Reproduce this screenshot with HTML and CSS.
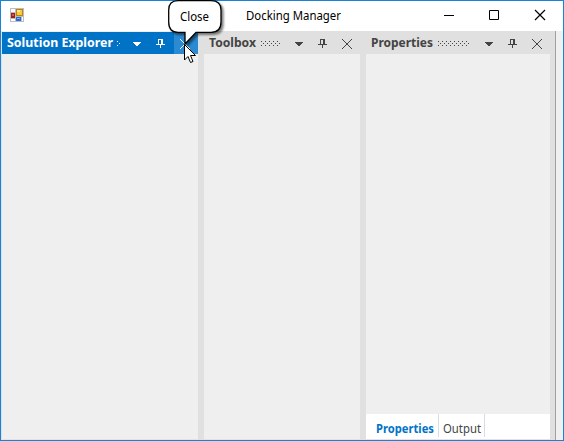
FILE: index.html
```html
<!DOCTYPE html>
<html lang="en">
<head>
<meta charset="utf-8">
<title>Docking Manager</title>
<link rel="stylesheet" href="styles.css">
</head>
<body>
<svg class="defs" width="0" height="0">
  <defs>
    <symbol id="arrow" viewBox="0 0 8 4"><path d="M0 0h8v1H0zM1 1h6v1H1zM2 2h4v1H2zM3 3h2v1H3z" fill="currentColor"/></symbol>
    <symbol id="pin" viewBox="0 0 9 9"><path d="M2 0h5v5H2zM3 1v4h2V1zM0 5h9v1H0zM4 6h1v3H4z" fill="currentColor" fill-rule="evenodd"/></symbol>
    <symbol id="cross" viewBox="0 0 10 10"><path d="M0 0L10 10M10 0L0 10" stroke="currentColor"/></symbol>
  </defs>
</svg>
<div class="window">
  <header class="titlebar">
    <svg class="app-icon" width="14" height="14" shape-rendering="crispEdges">
      <path d="M0 0h14v14H0z" fill="#bdbdbd"/><path d="M1 1h4v3H1zM1 11h4v2H1zM12 9h1v4h-1z" fill="#fff"/>
      <path d="M1 5h4v5H1z" fill="#a51c13"/><path d="M2 6h2v2H2z" fill="#d9534a"/>
      <path d="M6 1h7v7H6z" fill="#b8860b"/><path d="M7 2h5v5H7z" fill="#ffc83c"/><path d="M7 2h3v2H7z" fill="#ffe699"/>
      <path d="M6 9h5v4H6z" fill="#2f6bd0"/><path d="M7 10h3v1H7z" fill="#7da9f5"/>
    </svg>
    <h1><svg width="96" height="18"><text x="0" y="13" textLength="95" lengthAdjust="spacingAndGlyphs">Docking Manager</text></svg></h1>
    <svg class="min" width="10" height="10"><path d="M0 5h10v1H0z"/></svg>
    <svg class="max" width="10" height="10"><path d="M.5 .5h9v9h-9z" fill="none" stroke="#000"/></svg>
    <svg class="exit" width="10" height="10"><path d="M0 0L10 10M10 0L0 10" stroke="#000" stroke-width="1.2"/></svg>
  </header>
  <main class="dock">
    <section class="panel solution active">
      <div class="caption"><svg class="name" width="106" height="18"><text x="0" y="13" textLength="106" lengthAdjust="spacingAndGlyphs">Solution Explorer</text></svg>
        <span class="grip"></span>
        <svg class="arrow"><use href="#arrow"/></svg><svg class="pin"><use href="#pin"/></svg><span class="close"><svg><use href="#cross"/></svg></span>
      </div>
    </section>
    <section class="panel toolbox">
      <div class="caption"><svg class="name" width="48" height="18"><text x="0" y="13" textLength="47" lengthAdjust="spacingAndGlyphs">Toolbox</text></svg>
        <span class="grip"></span>
        <svg class="arrow"><use href="#arrow"/></svg><svg class="pin"><use href="#pin"/></svg><span class="close"><svg><use href="#cross"/></svg></span>
      </div>
    </section>
    <section class="panel properties">
      <div class="caption"><svg class="name" width="63" height="18"><text x="0" y="13" textLength="62" lengthAdjust="spacingAndGlyphs">Properties</text></svg>
        <span class="grip"></span>
        <svg class="arrow"><use href="#arrow"/></svg><svg class="pin"><use href="#pin"/></svg><span class="close"><svg><use href="#cross"/></svg></span>
      </div>
      <div class="content"></div>
      <nav class="tabs">
        <span class="tab selected"><svg width="59" height="18"><text x="0" y="13" textLength="58" lengthAdjust="spacingAndGlyphs">Properties</text></svg></span>
        <span class="tab"><svg width="39" height="18"><text x="0" y="13" textLength="38" lengthAdjust="spacingAndGlyphs">Output</text></svg></span>
      </nav>
    </section>
    <div class="edge"></div>
  </main>
</div>
<div class="tip">
  <svg width="60" height="50"><path class="shadow" d="M10 .7H43Q53 .7 53 10V22Q53 32.3 43 32.3H28L17 44V32.3H10Q.7 32.3 .7 22V10Q.7 .7 10 .7Z" fill="#fff" stroke="#000" stroke-width="1.3"/>
  <text x="12" y="21" textLength="29" lengthAdjust="spacingAndGlyphs">Close</text></svg>
</div>
<svg class="cursor" width="13" height="20"><path d="M.5 .5V16L4 12.5L6.5 18.5L9 17.5L6.5 11.5H11.5Z" fill="#fff" stroke="#000"/></svg>
</body>
</html>
```
FILE: styles.css
```css
* { box-sizing: border-box; }
body { margin: 0; width: 564px; height: 441px; overflow: hidden; font: 12px "Noto Sans", sans-serif; }
svg { display: block; flex: none; overflow: visible; }
.defs { position: absolute; }
.window { width: 564px; height: 441px; border: 1px solid #1883d7; background: #fff; display: flex; flex-direction: column; }
.titlebar { height: 30px; flex: none; display: flex; align-items: flex-start; }
.app-icon { margin: 7px 0 0 9px; }
h1 { margin: 6px 0 0 222px; font-size: 12px; font-weight: 400; }
.min { margin: 9px 0 0 102px; }
.max { margin: 9px 0 0 35px; }
.exit { margin: 9px 0 0 36px; }
.dock { flex: 1; display: flex; background: #e0e0e0; min-height: 0; padding-left: 1px; }
.panel { background: #efefef; margin-right: 6px; border-bottom: 1px solid #e3e3e6; display: flex; flex-direction: column; }
.solution { width: 196px; }
.toolbox { width: 156px; }
.properties { width: 184px; margin-right: 5px; }
.caption { height: 23px; flex: none; display: flex; align-items: flex-start; padding: 1px 0 0 5px; background: #e0e0e0; color: #444; }
.caption text { font: 700 12px "Noto Sans", sans-serif; fill: currentColor; }
.active .caption { height: 22px; margin-top: 1px; padding-top: 0; background: #0173c7; color: #fff; }
.name { margin-top: 2px; }
.grip {
  width: 3px;
  height: 5px;
  margin: 9px 0 0 4px;
  background-image: linear-gradient(currentColor, currentColor), linear-gradient(currentColor, currentColor), linear-gradient(currentColor, currentColor);
  background-size: 1px 1px;
  background-repeat: no-repeat;
  background-position: 0 0, 2px 2px, 0 4px;
}
.toolbox .grip, .properties .grip {
  width: 19px;
  background-image:
    repeating-linear-gradient(90deg, currentColor 0 1px, transparent 1px 4px),
    repeating-linear-gradient(90deg, transparent 0 2px, currentColor 2px 3px, transparent 3px 4px),
    repeating-linear-gradient(90deg, currentColor 0 1px, transparent 1px 4px);
  background-size: 100% 1px;
  background-position: 0 0, 0 2px, 0 4px;
}
.properties .grip { width: 31px; }
.caption .arrow { width: 8px; height: 4px; margin: 10px 0 0 auto; }
.caption .pin { width: 9px; height: 9px; margin: 7px 0 0 15px; }
.close { width: 24px; height: 22px; margin-left: 9px; padding: 7px 0 0 6px; }
.close svg { width: 10px; height: 10px; }
.active .close { background: #2b8ad1; }
.content { flex: 1; }
.tabs { height: 25px; flex: none; display: flex; background: #fff; padding-left: 5px; }
.tab { height: 23px; border-right: 1px solid #dcdce0; padding: 6px 4px 0 5px; width: 68px; }
.tab + .tab { width: 46px; padding-left: 4px; }
.tab text { font: 12px "Noto Sans", sans-serif; fill: #444; }
.tab.selected text { font-weight: 700; fill: #0173c7; }
.edge { flex: 1; background: #f0f0f0; border-left: 1px solid #a0a0a0; }
.tip { position: absolute; left: 168px; top: 0; }
.shadow { filter: drop-shadow(2px 2px 1px rgba(0,0,0,.5)); }
.cursor { position: absolute; left: 184px; top: 44px; }
```
